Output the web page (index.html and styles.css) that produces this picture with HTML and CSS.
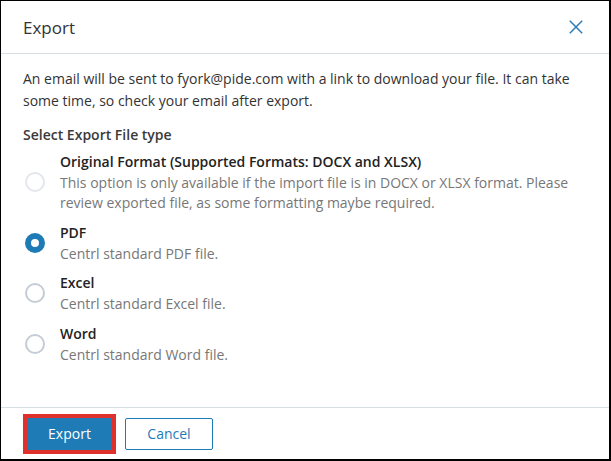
FILE: index.html
```html
<!DOCTYPE html>
<html>
<head>
<meta charset="utf-8">
<link rel="stylesheet" href="styles.css">
</head>
<body>
<div class="dialog">
  <div class="header">
    <div class="title">Export</div>
    <svg class="close" width="14" height="14" viewBox="0 0 14 14"><path d="M0.8 0.8 L13.2 13.2 M13.2 0.8 L0.8 13.2" stroke="#2b7bb5" stroke-width="1.5" fill="none"/></svg>
  </div>
  <div class="body">
    <p class="intro">An email will be sent to fyork@pide.com with a link to download your file. It can take some time, so check your email after export.</p>
    <div class="label">Select Export File type</div>
    <div class="options">
      <div class="option">
        <span class="radio disabled"></span>
        <div class="opt-text">
          <div class="opt-title">Original Format (Supported Formats: DOCX and XLSX)</div>
          <div class="opt-desc">This option is only available if the import file is in DOCX or XLSX format. Please review exported file, as some formatting maybe required.</div>
        </div>
      </div>
      <div class="option">
        <span class="radio checked"></span>
        <div class="opt-text">
          <div class="opt-title">PDF</div>
          <div class="opt-desc">Centrl standard PDF file.</div>
        </div>
      </div>
      <div class="option">
        <span class="radio"></span>
        <div class="opt-text">
          <div class="opt-title">Excel</div>
          <div class="opt-desc">Centrl standard Excel file.</div>
        </div>
      </div>
      <div class="option">
        <span class="radio"></span>
        <div class="opt-text">
          <div class="opt-title">Word</div>
          <div class="opt-desc">Centrl standard Word file.</div>
        </div>
      </div>
    </div>
  </div>
  <div class="footer">
    <div class="highlight"><button class="btn primary">Export</button></div>
    <button class="btn secondary">Cancel</button>
  </div>
</div>
</body>
</html>
```
FILE: styles.css
```css
html, body {
  margin: 0;
  padding: 0;
  background: #fff;
}
body {
  font-family: "Open Sans", "Noto Sans", sans-serif;
  color: #333;
}
.dialog {
  box-sizing: border-box;
  width: 611px;
  height: 461px;
  border-style: solid;
  border-color: #000;
  border-width: 1px 2px 2px 1px;
  display: flex;
  flex-direction: column;
}
.header {
  height: 52px;
  border-bottom: 1px solid #d6dfe2;
  display: flex;
  align-items: center;
  justify-content: space-between;
  padding: 0 26px 0 22px;
  flex-shrink: 0;
}
.title {
  font-size: 17px;
  color: #333;
}
.close {
  display: block;
}
.body {
  flex: 1;
  padding: 14px 22px 0 22px;
}
.intro {
  margin: 0;
  font-size: 14px;
  line-height: 22px;
  color: #333;
}
.label {
  margin-top: 12px;
  font-size: 14px;
  font-weight: 600;
  line-height: 22px;
  color: #3a3a3a;
}
.options {
  display: flex;
  flex-direction: column;
  gap: 8.5px;
  margin-top: 5px;
}
.option {
  display: flex;
  align-items: center;
}
.radio {
  box-sizing: border-box;
  width: 20px;
  height: 20px;
  border-radius: 50%;
  border: 2px solid #c5ccd6;
  margin: 0 15px 0 2px;
  flex-shrink: 0;
}
.radio.disabled {
  border-color: #e3e7eb;
}
.radio.checked {
  border: 6px solid #1f7bb6;
}
.opt-title {
  font-size: 14px;
  font-weight: 600;
  line-height: 22px;
  color: #222;
}
.opt-desc {
  font-size: 14px;
  line-height: 20px;
  color: #777;
}
.footer {
  height: 51px;
  border-top: 1px solid #d6dfe2;
  display: flex;
  align-items: center;
  padding: 0 22px;
  gap: 9px;
  flex-shrink: 0;
}
.highlight {
  border: 4px solid #e0302c;
  display: flex;
}
.btn {
  font-family: "Open Sans", "Noto Sans", sans-serif;
  font-size: 14px;
  height: 32px;
  border-radius: 2px;
  cursor: pointer;
}
.primary {
  width: 85px;
  background: #1f7bb6;
  color: #fff;
  border: 1px solid #1f7bb6;
  border-radius: 0;
}
.secondary {
  width: 88px;
  background: #fff;
  color: #1f7bb6;
  border: 1px solid #1f7bb6;
}
```
